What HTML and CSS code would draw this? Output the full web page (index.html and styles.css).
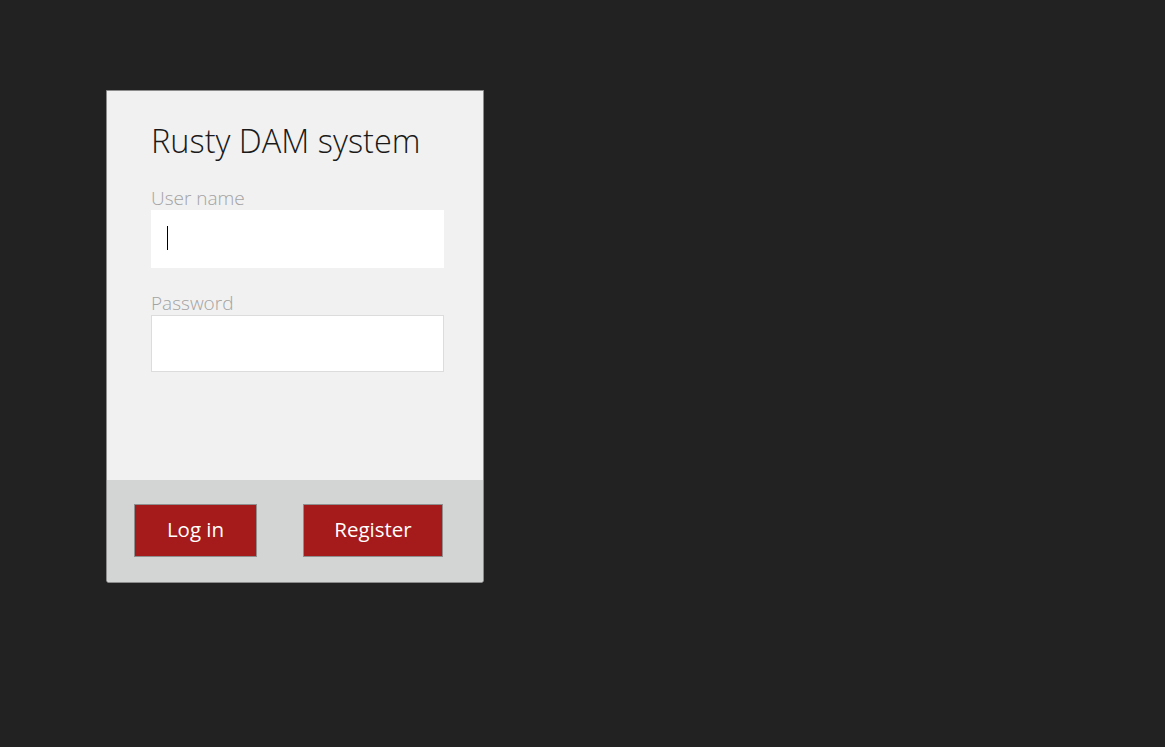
FILE: index.html
```html
<!DOCTYPE html>
<html>
<head>
<meta charset="utf-8">
<link rel="stylesheet" href="styles.css">
</head>
<body>
<div class="card">
  <div class="content">
    <h1 class="title">Rusty DAM system</h1>
    <label class="label">User name</label>
    <div class="field">
      <input class="input input-plain" type="text">
      <span class="caret"></span>
    </div>
    <label class="label label-second">Password</label>
    <input class="input input-bordered" type="password">
  </div>
  <div class="footer">
    <button class="btn btn-login">Log in</button>
    <button class="btn btn-register">Register</button>
  </div>
</div>
</body>
</html>
```
FILE: styles.css
```css
html, body {
  margin: 0;
  padding: 0;
  background: #222222;
}
body {
  padding: 90px 0 0 106px;
  font-family: "Open Sans", "Noto Sans", sans-serif;
}
.card {
  width: 376px;
  height: 491px;
  border: 1px solid #8c8c8c;
  background: #f1f1f1;
  display: flex;
  flex-direction: column;
  border-radius: 0 0 3px 3px;
  overflow: hidden;
}
.content {
  flex: 1;
  padding: 0 38px 0 44px;
  display: flex;
  flex-direction: column;
}
.title {
  margin: 30px 0 0 0;
  font-weight: 300;
  font-size: 32.5px;
  line-height: 40px;
  height: 40px;
  color: #1a1a1a;
  letter-spacing: 0;
  white-space: nowrap;
}
.label {
  display: block;
  font-weight: 300;
  font-size: 19px;
  line-height: 23px;
  color: #a3a3a3;
  margin-top: 26px;
  height: 23px;
}
.label-second {
  margin-top: 24px;
}
.field {
  position: relative;
}
.input {
  display: block;
  box-sizing: border-box;
  width: 293px;
  margin: 0;
  background: #ffffff;
  outline: none;
  font-family: inherit;
}
.input-plain {
  height: 58px;
  border: none;
}
.input-bordered {
  height: 57px;
  border: 1px solid #dcdcdc;
}
.caret {
  position: absolute;
  left: 16px;
  top: 16px;
  width: 1px;
  height: 24px;
  background: #000000;
}
.footer {
  height: 102px;
  flex: none;
  background: #d3d5d4;
  box-sizing: border-box;
  padding: 24px 0 0 27px;
  display: flex;
  gap: 46px;
  align-items: flex-start;
}
.btn {
  height: 53px;
  box-sizing: border-box;
  border: 1px solid #8f8f8f;
  background: #a51a1a;
  color: #ffffff;
  font-family: inherit;
  font-weight: 400;
  font-size: 20.5px;
  padding: 0 0 3px 0;
  cursor: pointer;
}
.btn-login {
  width: 123px;
}
.btn-register {
  width: 140px;
}
```
